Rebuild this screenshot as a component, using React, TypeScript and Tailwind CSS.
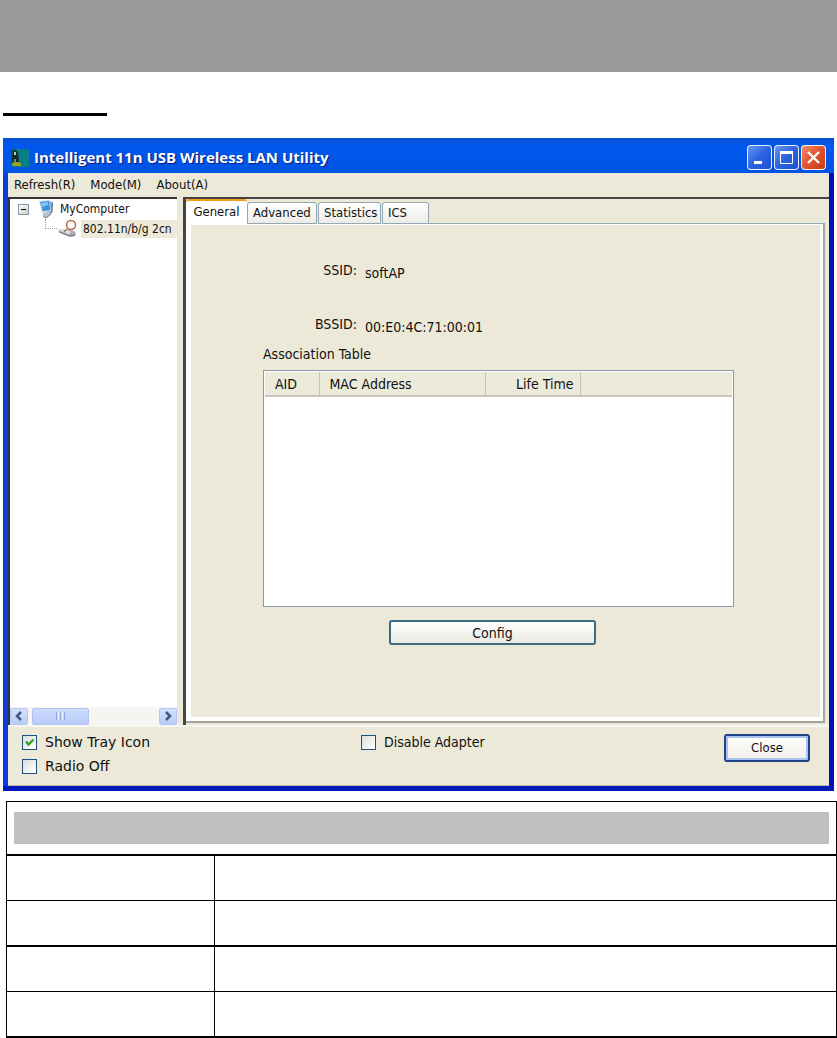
import { useState } from "react";
import type { ReactNode } from "react";

const TABS = ["General", "Advanced", "Statistics", "ICS"];

const TAB_WIDTHS: Record<string, string> = {
  General: "w-[61px]",
  Advanced: "w-[70px] mr-px",
  Statistics: "w-[63px] mr-px",
  ICS: "w-[47px]",
};

function AppIcon() {
  return (
    <svg width="18" height="18" viewBox="0 0 18 18" className="shrink-0">
      <rect width="18" height="18" fill="#087f86" />
      <path d="M0 0h5l1 3 2 3v6l-2 2H0z" fill="#0b5a58" />
      <path d="M2 2h4l1 3v3l1 3-1 2H2l-1-4z" fill="#182a25" />
      <path d="M3 3h2v3H3z" fill="#b9c8bd" />
      <path d="M3 10h2v3H3z" fill="#77866b" />
      <path d="M1 14l4-1 5 1v3H2z" fill="#a7a318" />
    </svg>
  );
}

function ComputerIcon() {
  return (
    <svg width="18" height="20" viewBox="0 0 18 20" className="shrink-0">
      <path d="M10 2l5 1v10l-4 4-3-1z" fill="#a9b6c8" />
      <path d="M12 3l3 1-1 9-2 2z" fill="#6f86a6" />
      <path d="M1 2l11-1 1 11-9 2z" fill="#c3d6ec" />
      <path d="M2 3l9-1 1 9-7 1z" fill="#3a8ee0" />
      <path d="M3 4l7-1v3L4 8z" fill="#83c6fa" />
      <path d="M5 14l5-1 3 2-4 4-4-2z" fill="#b7c0ce" />
      <path d="M5 17l3 2 5-4" fill="none" stroke="#6a7890" />
    </svg>
  );
}

function AdapterIcon() {
  return (
    <svg width="20" height="19" viewBox="0 0 20 19" className="shrink-0">
      <path d="M1 11l4-1 12 2 2 2-1 3-5 1L2 13z" fill="#a9adb4" />
      <path d="M1 11l4-1 9 3-2 2z" fill="#e3e6ea" />
      <path d="M2 13l10 4 6-1" fill="none" stroke="#70757d" />
      <circle cx="14" cy="6" r="4.500" fill="#fff" fillOpacity="0.6" stroke="#b5653c" strokeWidth="1.500" />
      <path d="M10 10l-3 3" stroke="#8b7365" strokeWidth="1.500" />
    </svg>
  );
}

function CaptionButton({ label, red, children }: { label: string; red?: boolean; children: ReactNode }) {
  return (
    <button
      aria-label={label}
      className={
        "flex size-[25px] items-center justify-center rounded border border-white/90 " +
        (red
          ? "bg-linear-to-br from-[#ee8a68] via-[#e0512c] to-[#c83c14]"
          : "bg-linear-to-br from-[#6a95f3] via-[#2c62e0] to-[#1c4fd0]")
      }
    >
      <svg width="21" height="21" viewBox="0 0 21 21" fill="none" stroke="#fff">
        {children}
      </svg>
    </button>
  );
}

function CheckBox({ label, defaultChecked = false }: { label: string; defaultChecked?: boolean }) {
  const [checked, setChecked] = useState(defaultChecked);
  return (
    <label className="flex h-6 items-center gap-2">
      <span className="grid size-[15px] shrink-0">
        <input
          type="checkbox"
          checked={checked}
          onChange={(e) => setChecked(e.target.checked)}
          className="col-start-1 row-start-1 size-[15px] appearance-none border border-[#1f5180] bg-linear-to-br from-[#dcdfd8] to-white"
        />
        {checked && (
          <svg
            viewBox="0 0 15 15"
            className="pointer-events-none col-start-1 row-start-1 size-[15px]"
            fill="none"
            stroke="#2fa02c"
            strokeWidth="2.4"
          >
            <path d="M4 6.500l2.500 3L11.500 4.500" />
          </svg>
        )}
      </span>
      {label}
    </label>
  );
}

function ScrollArrow({ label, d }: { label: string; d: string }) {
  return (
    <button
      aria-label={label}
      className="flex h-[17px] w-[18px] items-center justify-center rounded-xs border border-[#b5c7f2] bg-linear-to-b from-[#d3e0fd] to-[#b9ccf8]"
    >
      <svg width="10" height="12" viewBox="0 0 10 12" fill="none" stroke="#41597f" strokeWidth="2.5">
        <path d={d} />
      </svg>
    </button>
  );
}

function DeviceTree() {
  return (
    <div className="flex w-[169px] shrink-0 flex-col border-t-2 border-l-2 border-[#333] bg-white text-xs">
      <div className="flex-1 whitespace-nowrap">
        <div className="flex h-5 items-center pl-2">
          <button
            aria-label="Collapse"
            className="mr-[9px] flex size-[11px] items-center justify-center border border-[#8595ac] bg-linear-to-br from-white to-[#cfccc0]"
          >
            <span className="h-px w-[5px] bg-black" />
          </button>
          <ComputerIcon />
          <span className="ml-1">MyComputer</span>
        </div>
        <div className="flex h-[19px] items-center">
          <span className="ml-[35px] h-[10px] w-3 shrink-0 self-start border-b border-l border-dotted border-[#999]" />
          <AdapterIcon />
          <span className="ml-1 flex-1 bg-[#ece9d8] pl-[2px] leading-[18px]">802.11n/b/g 2cn</span>
        </div>
      </div>
      <div className="flex h-[18px] items-center justify-between bg-[#f6f5f1]">
        <ScrollArrow label="Scroll left" d="M7 2L3 6l4 4" />
        <div className="mr-auto ml-1 flex h-[17px] w-[57px] items-center justify-center gap-px rounded-xs border border-[#b0c3f3] bg-linear-to-b from-[#cddcfe] to-[#b8cbf8]">
          <span className="h-2 w-px bg-[#8eaae8]" />
          <span className="h-2 w-px bg-[#eef3ff]" />
          <span className="h-2 w-px bg-[#8eaae8]" />
          <span className="h-2 w-px bg-[#eef3ff]" />
          <span className="h-2 w-px bg-[#8eaae8]" />
        </div>
        <ScrollArrow label="Scroll right" d="M3 2l4 4-4 4" />
      </div>
    </div>
  );
}

function GeneralPanel() {
  return (
    <div className="pt-[35px] pr-[86px] pl-[72px] text-sm">
      <dl className="grid grid-cols-[94px_1fr] gap-x-2 gap-y-[31px] leading-5">
        <dt className="text-right">SSID:</dt>
        <dd className="pt-[3px]">softAP</dd>
        <dt className="text-right">BSSID:</dt>
        <dd className="pt-[3px]">00:E0:4C:71:00:01</dd>
      </dl>
      <div className="mt-[7px] h-5 leading-5">Association Table</div>
      <div className="mt-[6px] h-[237px] border border-[#8a9ba8] bg-white p-px">
        <table className="w-full table-fixed border-collapse text-left" aria-label="Association Table">
          <thead>
            <tr className="h-6 border-b-2 border-[#cbc7b8] bg-[#ebeadb]">
              <th className="w-[54px] border-r border-[#c7c5b2] pl-[10px] font-normal">AID</th>
              <th className="w-[166px] border-r border-[#c7c5b2] pl-[10px] font-normal">MAC Address</th>
              <th className="w-[95px] border-r border-[#c7c5b2] pr-[6px] text-right font-normal">Life Time</th>
              <td />
            </tr>
          </thead>
          <tbody />
        </table>
      </div>
      <button className="mt-[13px] ml-[126px] h-[25px] w-[207px] rounded-[3px] border-2 border-[#3d6a80] bg-linear-to-b from-white to-[#ebe9e1] leading-5">
        Config
      </button>
    </div>
  );
}

function UtilityWindow() {
  const [tab, setTab] = useState("General");

  return (
    <div className="mx-[3px] overflow-hidden bg-linear-to-r from-[#0a3fdc] to-[#0013b4] font-['DejaVu_Sans_Condensed','Noto_Sans',sans-serif] text-[#111]">
      <div className="flex h-[35px] items-center gap-[5px] bg-linear-to-b from-[#0a4fd0] via-[#0058ee] via-20% to-[#0054e3] px-2 pt-1">
        <AppIcon />
        <h1 className="flex-1 font-['Open_Sans','Noto_Sans',sans-serif] text-[15px] font-bold whitespace-nowrap text-white [text-shadow:1px_1px_1px_#0a1883]">
          Intelligent 11n USB Wireless LAN Utility
        </h1>
        <div className="flex gap-[2px]">
          <CaptionButton label="Minimize">
            <path d="M5 15.500h8" strokeWidth="3" />
          </CaptionButton>
          <CaptionButton label="Maximize">
            <path d="M4 5.500h13" strokeWidth="3" />
            <path d="M4.500 5v11.500h12V5" />
          </CaptionButton>
          <CaptionButton label="Close window" red>
            <path d="M5 5l11 11M16 5L5 16" strokeWidth="2.400" />
          </CaptionButton>
        </div>
      </div>

      <div className="mx-[5px] bg-[#ece9d8]">
        <div className="flex h-6 items-center gap-[15px] pl-[6px] text-[13px]">
          <button>Refresh(R)</button>
          <button>Mode(M)</button>
          <button>About(A)</button>
        </div>

        <div className="flex h-[528px] gap-[6px]">
          <DeviceTree />
          <div className="flex min-w-0 flex-1 flex-col border-t-2 border-l-[3px] border-[#444] pr-1 pb-[2px]">
            <div className="flex h-[25px] items-end text-[13px]" role="tablist">
              {TABS.map((t) => (
                <button
                  key={t}
                  role="tab"
                  aria-selected={t === tab}
                  onClick={() => setTab(t)}
                  className={
                    TAB_WIDTHS[t] +
                    " shrink-0 rounded-t-[3px] whitespace-nowrap " +
                    (t === tab
                      ? "h-[25px] border-t-2 border-[#f59b1d] bg-white pb-[2px]"
                      : "h-[22px] border border-[#91a7b4] bg-linear-to-b from-white to-[#ecebe6] px-[5px] text-left leading-5")
                  }
                >
                  {t}
                </button>
              ))}
              <span className="flex-1 self-end border-b border-[#91a7b4]" />
            </div>
            <div className="flex-1 border-r-2 border-b-2 border-[#a3a598] bg-white pt-px pr-[3px] pb-1 pl-[5px]" role="tabpanel">
              <div className="h-full bg-[#ece9d8]">{tab === "General" && <GeneralPanel />}</div>
            </div>
          </div>
        </div>

        <div className="flex h-[61px] items-start border-t-2 border-b border-t-[#f7f6f0] border-b-[#b9b6a4] pr-[19px] pl-[14px] text-sm">
          <div className="w-[339px] pt-[3px] font-['DejaVu_Sans',sans-serif]">
            <CheckBox label="Show Tray Icon" defaultChecked />
            <CheckBox label="Radio Off" />
          </div>
          <div className="flex-1 pt-[3px]">
            <CheckBox label="Disable Adapter" />
          </div>
          <button className="mt-[7px] h-7 w-[86px] rounded-[3px] border-2 border-[#1f4386] bg-linear-to-b from-white to-[#f0eee6] text-[13px] leading-5 shadow-[inset_0_0_0_2px_#a9c3f0]">
            Close
          </button>
        </div>
      </div>
      <div className="h-[5px] bg-[#0019b8]" />
    </div>
  );
}

export default function App() {
  return (
    <div className="min-h-screen bg-white">
      <div className="h-[72px] bg-[#999]" />
      <div className="mt-[41px] mb-[22px] ml-[3px] h-[3px] w-[104px] bg-black" />
      <UtilityWindow />
      <table className="mt-[10px] ml-[6px] w-[calc(100%-6px)] border-separate border-spacing-0 border-t border-l border-black">
        <tbody>
          <tr>
            <td colSpan={2} className="h-[54px] border-r border-b-2 border-black px-[7px]">
              <div className="h-8 bg-[#c0c0c0]" />
            </td>
          </tr>
          <tr>
            <td className="h-[45px] w-[208px] border-r border-b border-black" />
            <td className="border-r border-b border-black" />
          </tr>
          <tr>
            <td className="h-[46px] border-r border-b-2 border-black" />
            <td className="border-r border-b-2 border-black" />
          </tr>
          <tr>
            <td className="h-[45px] border-r border-b border-black" />
            <td className="border-r border-b border-black" />
          </tr>
          <tr>
            <td className="h-[46px] border-r border-b-2 border-black" />
            <td className="border-r border-b-2 border-black" />
          </tr>
        </tbody>
      </table>
    </div>
  );
}
